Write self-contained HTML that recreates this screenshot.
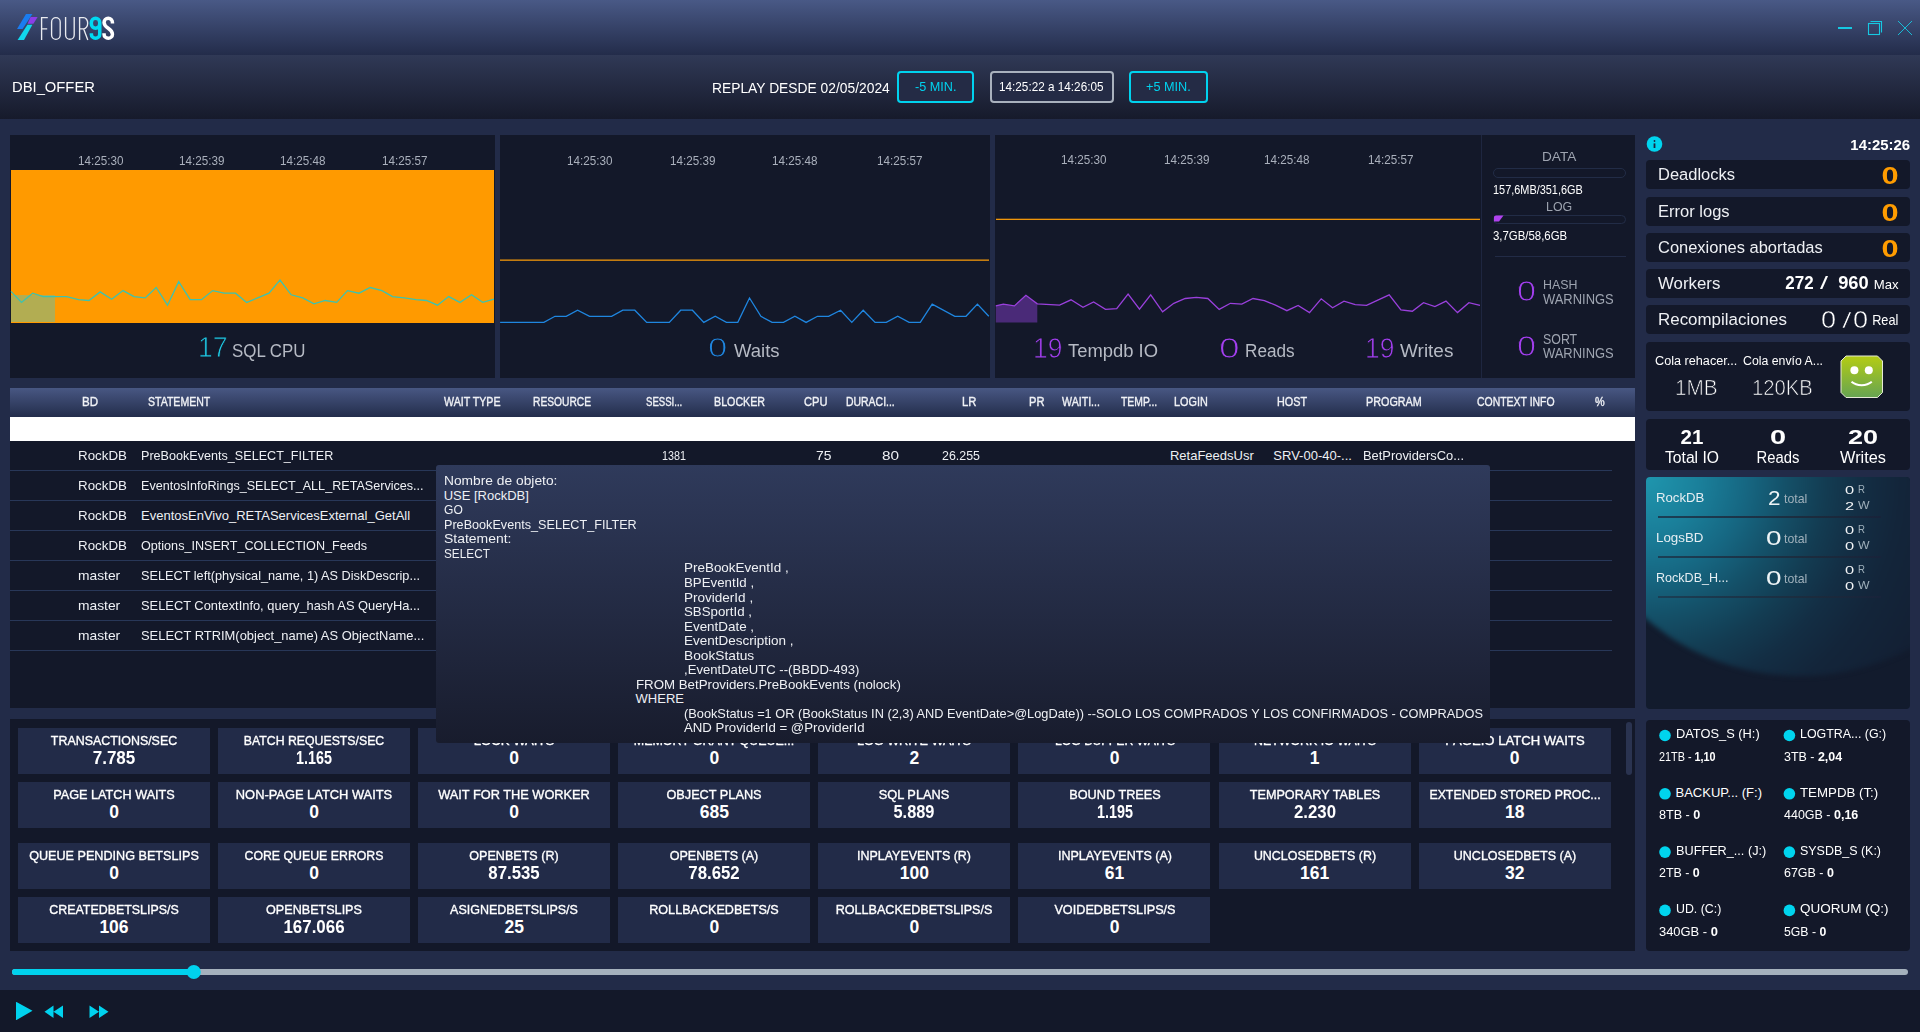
<!DOCTYPE html>
<html><head><meta charset="utf-8"><style>
html,body{margin:0;padding:0;width:1920px;height:1032px;overflow:hidden;background:#222b48;}
body{position:relative;font-family:"Liberation Sans",sans-serif;color:#fff;}
.b{position:absolute;}
.t{position:absolute;white-space:nowrap;z-index:5;}
svg.L{position:absolute;left:0;top:0;z-index:3;}
</style></head><body>
<div class="b" style="left:0px;top:0px;width:1920px;height:55px;background:linear-gradient(#495986,#232c4a);"></div>
<div class="b" style="left:0px;top:55px;width:1920px;height:64px;background:linear-gradient(#303956,#161a2b);"></div>
<div class="b" style="left:0px;top:119px;width:1920px;height:871px;background:#222b48;"></div>
<div class="b" style="left:0px;top:990px;width:1920px;height:42px;background:#131829;"></div>
<div class="b" style="left:897px;top:71px;width:77px;height:32px;border:2px solid #00d2ee;border-radius:4px;box-sizing:border-box;background:#242b45;"></div>
<div class="b" style="left:990px;top:71px;width:124px;height:32px;border:2px solid #a9b1bd;border-radius:4px;box-sizing:border-box;background:#242b45;"></div>
<div class="b" style="left:1129px;top:71px;width:79px;height:32px;border:2px solid #00d2ee;border-radius:4px;box-sizing:border-box;background:#242b45;"></div>
<div class="b" style="left:10px;top:135px;width:485px;height:243px;background:#131829;"></div>
<div class="b" style="left:500px;top:135px;width:490px;height:243px;background:#131829;"></div>
<div class="b" style="left:995px;top:135px;width:640px;height:243px;background:#131829;"></div>
<div class="b" style="left:1481px;top:135px;width:1px;height:243px;background:#1e2640;"></div>
<div class="b" style="left:1493px;top:168px;width:133px;height:10px;border:1.5px solid #222c46;border-radius:5px;box-sizing:border-box;"></div>
<div class="b" style="left:1493px;top:214.5px;width:133px;height:9.5px;border:1.5px solid #222c46;border-radius:5px;box-sizing:border-box;"></div>
<div class="b" style="left:1495px;top:255.5px;width:131px;height:1.0px;background:#222b46;"></div>
<div class="b" style="left:1646px;top:160px;width:264px;height:29px;background:#131829;border-radius:4px;"></div>
<div class="b" style="left:1646px;top:197px;width:264px;height:29px;background:#131829;border-radius:4px;"></div>
<div class="b" style="left:1646px;top:233px;width:264px;height:29px;background:#131829;border-radius:4px;"></div>
<div class="b" style="left:1646px;top:269px;width:264px;height:29px;background:#131829;border-radius:4px;"></div>
<div class="b" style="left:1646px;top:305px;width:264px;height:29px;background:#131829;border-radius:4px;"></div>
<div class="b" style="left:1646px;top:342px;width:264px;height:69px;background:#131829;border-radius:4px;"></div>
<div class="b" style="left:1646px;top:419px;width:264px;height:51px;background:#131829;border-radius:4px;"></div>
<div class="b" style="left:1646px;top:477px;width:264px;height:232px;background:#121b2d;border-radius:4px;overflow:hidden;"><div class="b" style="left:-82px;top:-273px;width:472px;height:472px;border-radius:50%;filter:blur(2.5px);background:radial-gradient(circle at 82px 273px,#1f96ae 0px,#1a7f9a 55px,#166782 100px,#145068 140px,#133c52 180px,#132e44 215px,#13253a 255px,#131f33 320px);"></div></div>
<div class="b" style="left:1658px;top:515.5px;width:223px;height:2.0px;background:linear-gradient(90deg,#1a3f55,#1b2b3d 70%,#18233a);"></div>
<div class="b" style="left:1658px;top:555.5px;width:223px;height:2.0px;background:linear-gradient(90deg,#1a3f55,#1b2b3d 70%,#18233a);"></div>
<div class="b" style="left:1658px;top:595.5px;width:223px;height:2.0px;background:linear-gradient(90deg,#1a3f55,#1b2b3d 70%,#18233a);"></div>
<div class="b" style="left:1646px;top:720px;width:264px;height:231px;background:#131829;border-radius:4px;"></div>
<div class="b" style="left:10px;top:388px;width:1625px;height:29px;background:linear-gradient(#485783,#232d4b);"></div>
<div class="b" style="left:10px;top:417px;width:1625px;height:24px;background:#ffffff;"></div>
<div class="b" style="left:10px;top:441px;width:1625px;height:267px;background:#131829;"></div>
<div class="b" style="left:10px;top:470px;width:1602px;height:1px;background:#283758;"></div>
<div class="b" style="left:10px;top:500px;width:1602px;height:1px;background:#283758;"></div>
<div class="b" style="left:10px;top:530px;width:1602px;height:1px;background:#283758;"></div>
<div class="b" style="left:10px;top:560px;width:1602px;height:1px;background:#283758;"></div>
<div class="b" style="left:10px;top:590px;width:1602px;height:1px;background:#283758;"></div>
<div class="b" style="left:10px;top:620px;width:1602px;height:1px;background:#283758;"></div>
<div class="b" style="left:10px;top:650px;width:1602px;height:1px;background:#283758;"></div>
<div class="b" style="left:10px;top:719px;width:1625px;height:232px;background:#131829;"></div>
<div class="b" style="left:1625.5px;top:722px;width:6.5px;height:53px;background:#2a3350;border-radius:3px;"></div>
<div class="b" style="left:18px;top:728px;width:192px;height:46px;background:#222b48;"></div>
<div class="b" style="left:218px;top:728px;width:192px;height:46px;background:#222b48;"></div>
<div class="b" style="left:418px;top:728px;width:192px;height:46px;background:#222b48;"></div>
<div class="b" style="left:618px;top:728px;width:192px;height:46px;background:#222b48;"></div>
<div class="b" style="left:818px;top:728px;width:192px;height:46px;background:#222b48;"></div>
<div class="b" style="left:1018px;top:728px;width:192px;height:46px;background:#222b48;"></div>
<div class="b" style="left:1219px;top:728px;width:192px;height:46px;background:#222b48;"></div>
<div class="b" style="left:1419px;top:728px;width:192px;height:46px;background:#222b48;"></div>
<div class="b" style="left:18px;top:782px;width:192px;height:46px;background:#222b48;"></div>
<div class="b" style="left:218px;top:782px;width:192px;height:46px;background:#222b48;"></div>
<div class="b" style="left:418px;top:782px;width:192px;height:46px;background:#222b48;"></div>
<div class="b" style="left:618px;top:782px;width:192px;height:46px;background:#222b48;"></div>
<div class="b" style="left:818px;top:782px;width:192px;height:46px;background:#222b48;"></div>
<div class="b" style="left:1018px;top:782px;width:192px;height:46px;background:#222b48;"></div>
<div class="b" style="left:1219px;top:782px;width:192px;height:46px;background:#222b48;"></div>
<div class="b" style="left:1419px;top:782px;width:192px;height:46px;background:#222b48;"></div>
<div class="b" style="left:18px;top:843px;width:192px;height:46px;background:#222b48;"></div>
<div class="b" style="left:218px;top:843px;width:192px;height:46px;background:#222b48;"></div>
<div class="b" style="left:418px;top:843px;width:192px;height:46px;background:#222b48;"></div>
<div class="b" style="left:618px;top:843px;width:192px;height:46px;background:#222b48;"></div>
<div class="b" style="left:818px;top:843px;width:192px;height:46px;background:#222b48;"></div>
<div class="b" style="left:1018px;top:843px;width:192px;height:46px;background:#222b48;"></div>
<div class="b" style="left:1219px;top:843px;width:192px;height:46px;background:#222b48;"></div>
<div class="b" style="left:1419px;top:843px;width:192px;height:46px;background:#222b48;"></div>
<div class="b" style="left:18px;top:897px;width:192px;height:46px;background:#222b48;"></div>
<div class="b" style="left:218px;top:897px;width:192px;height:46px;background:#222b48;"></div>
<div class="b" style="left:418px;top:897px;width:192px;height:46px;background:#222b48;"></div>
<div class="b" style="left:618px;top:897px;width:192px;height:46px;background:#222b48;"></div>
<div class="b" style="left:818px;top:897px;width:192px;height:46px;background:#222b48;"></div>
<div class="b" style="left:1018px;top:897px;width:192px;height:46px;background:#222b48;"></div>
<div class="b" style="left:436px;top:465px;width:1054px;height:278px;background:linear-gradient(#2f3a5b,#181c2d);border-radius:3px;z-index:20;"></div>
<svg class="L" width="1920" height="1032" viewBox="0 0 1920 1032">
<polygon points="26,14 32.4,14 22.6,29 17,29" fill="#1a7cf0"/>
<polygon points="30.6,17 37.6,17 33.4,23.8 27.6,23.8" fill="#8b3ee6"/>
<polygon points="27.4,24.8 32.4,24.8 24,40 17.6,40" fill="#11d6ec"/>
<g fill="none" stroke="#e9ebf0" stroke-width="1.35" stroke-linecap="butt"><path d="M41.6,40 V17.6 H47.8 M41.6,28.8 H47.2"/><rect x="51.6" y="17.6" width="8.6" height="21.7" rx="4.3"/><path d="M65.6,17 V35 A4.3,4.3 0 0 0 74.2,35 V17"/><path d="M79.6,40 V17.6 H83.6 A4,5.5 0 0 1 83.6,28.8 H79.6 M83.6,28.8 L87.8,40"/></g>
<g fill="none" stroke-width="3.5"><path d="M91.35,22.55 A4.2,4.2 0 0 1 99.75,22.55 V34.15 A4.2,4.2 0 0 1 91.35,34.15 V33.2 M99.75,24.1 A4.2,4.2 0 0 1 91.35,24.1 V22.55" stroke="#00d9f0"/><path d="M112.45,23.6 V22.55 A4.2,4.2 0 0 0 104.05,22.55 C104.05,28.2 112.45,28.3 112.45,34.15 A4.2,4.2 0 0 1 104.05,34.15 V33.2" stroke="#ffffff"/></g>
<g stroke="#16c8e2" fill="none"><path d="M1838,28 H1852" stroke-width="2"/><rect x="1868.5" y="23.5" width="11" height="11" stroke-width="1.1"/><path d="M1870.5,21.5 H1881.5 V32.5" stroke-width="1.1"/><path d="M1898,21 L1912,35 M1912,21 L1898,35" stroke-width="0.9"/></g>
<rect x="11" y="170" width="483" height="153" fill="#ff9a00"/>
<rect x="11" y="295" width="44" height="27" fill="#b2ad52"/>
<polyline points="11.0,291.4 21.5,302.4 32.7,293.2 43.2,296.6 66.7,296.6 78.5,299.7 89.0,300.5 100.2,291.9 111.7,299.2 123.0,290.6 134.0,296.6 145.2,297.9 156.2,287.5 167.5,305.2 178.7,281.7 190.2,299.7 201.5,299.7 212.7,290.6 224.2,293.2 235.5,293.2 246.7,302.4 257.7,297.9 269.0,293.2 280.0,280.1 291.2,294.8 302.7,297.9 314.0,303.9 325.2,300.5 336.7,302.4 347.5,290.6 359.0,293.2 370.2,287.5 382.0,290.6 392.5,296.6 404.2,297.9 416.0,299.7 426.5,300.5 437.5,305.2 448.7,296.6 460.0,302.4 471.5,294.8 482.7,302.4 494.0,299.2" fill="none" stroke="#3cc3b0" stroke-width="1.3"/>
<rect x="500" y="259.5" width="489" height="1.3" fill="#f0960a"/>
<polyline points="500.1,322.4 543.9,322.4 555.0,316.3 566.2,316.3 577.6,310.2 589.6,316.3 611.6,316.3 622.8,310.2 634.8,310.2 646.7,322.4 669.3,322.4 680.7,310.2 692.4,310.2 703.8,322.4 715.2,316.3 726.4,322.4 737.8,322.4 749.5,298.0 760.9,316.3 772.1,322.4 783.5,322.4 794.9,316.3 806.1,322.4 817.5,316.3 828.6,316.3 840.6,310.2 851.8,322.4 863.2,310.2 875.1,322.4 886.3,322.4 897.7,316.3 909.1,322.4 920.3,322.4 932.2,304.1 954.8,316.3 966.0,316.3 977.4,304.1 988.8,316.3" fill="none" stroke="#1f86e0" stroke-width="1.3"/>
<rect x="996" y="218.7" width="484" height="1.3" fill="#f0960a"/>
<polygon points="995.8,322.4 995.8,305.9 1003.3,304.1 1014.4,305.9 1025.9,295.3 1037.3,303.8 1037.3,322.4" fill="#4a2a78"/>
<polyline points="995.8,305.9 1003.3,304.1 1014.4,305.9 1025.9,295.3 1037.3,303.8 1059.6,305.1 1071.0,299.8 1083.0,307.3 1093.6,301.9 1105.5,309.4 1116.7,308.6 1128.1,294.0 1139.5,309.1 1150.7,294.8 1162.6,311.8 1173.8,303.3 1185.2,298.5 1196.4,297.4 1207.8,298.5 1219.2,309.4 1230.4,303.3 1241.8,304.1 1253.0,298.5 1264.4,300.6 1275.5,305.1 1286.9,310.7 1298.1,305.4 1309.5,312.6 1321.2,298.8 1332.6,307.8 1344.0,301.1 1355.2,304.6 1366.6,305.4 1377.8,300.1 1389.2,294.8 1400.9,309.9 1412.3,311.2 1423.5,302.7 1434.9,306.5 1446.0,301.1 1457.5,312.6 1468.9,302.7 1480.0,305.4" fill="none" stroke="#9a40dc" stroke-width="1.3"/>
<path d="M1494,217 Q1494,215.5 1496,215.5 L1503.5,215.5 L1499,221.5 L1494,221.5 Z" fill="#b042ee"/>
<circle cx="1654.5" cy="144" r="7.8" fill="#00d4ee"/>
<rect x="1653.6" y="143.4" width="1.8" height="4.6" fill="#1c2440"/><rect x="1653.6" y="140" width="1.8" height="1.9" rx="0.9" fill="#1c2440"/>
<defs><linearGradient id="sm" x1="0" y1="0" x2="0" y2="1"><stop offset="0" stop-color="#b4cc14"/><stop offset="1" stop-color="#66a452"/></linearGradient></defs>
<polygon points="1846,356 1877.5,356 1882.5,361 1882.5,392.5 1877.5,397.5 1846,397.5 1841,392.5 1841,361" fill="url(#sm)" stroke="#e6ead6" stroke-width="1"/>
<circle cx="1854.4" cy="370.3" r="4" fill="#fff"/><circle cx="1868.8" cy="370.3" r="4" fill="#fff"/>
<path d="M1851.5,381.8 A13,9 0 0 0 1871.8,381.8" stroke="#fff" stroke-width="2" fill="none"/>
<circle cx="1665.0" cy="735.5" r="5.8" fill="#00d4ee"/>
<circle cx="1789.4" cy="735.5" r="5.8" fill="#00d4ee"/>
<circle cx="1665.0" cy="793.8" r="5.8" fill="#00d4ee"/>
<circle cx="1789.4" cy="793.8" r="5.8" fill="#00d4ee"/>
<circle cx="1665.0" cy="852.1" r="5.8" fill="#00d4ee"/>
<circle cx="1789.4" cy="852.1" r="5.8" fill="#00d4ee"/>
<circle cx="1665.0" cy="910.4" r="5.8" fill="#00d4ee"/>
<circle cx="1789.4" cy="910.4" r="5.8" fill="#00d4ee"/>
<rect x="12" y="969" width="1896" height="6" rx="3" fill="#a5b1bd"/>
<rect x="12" y="969" width="182" height="6" rx="3" fill="#00d2ee"/>
<circle cx="193.8" cy="972" r="7" fill="#00d2ee"/>
<path d="M16,1002.5 Q15.5,1002 16.5,1002 L32.5,1010.8 L16.5,1020 Q15.5,1020.3 16,1019.5 Z" fill="#00d2ee"/>
<path d="M44.5,1011.7 L53.5,1005.5 V1018 Z M53.5,1011.7 L63,1005.5 V1018 Z" fill="#00d2ee"/>
<path d="M89.5,1005.5 L99,1011.7 L89.5,1018 Z M99,1005.5 L108.5,1011.7 L99,1018 Z" fill="#00d2ee"/>
</svg>
<div class="t" style="font-size:14.50px;line-height:14.50px;top:80.00px;font-weight:500;left:11.98px;transform:scaleX(1.0189);transform-origin:0 0;"><span>DBI_OFFER</span></div>
<div class="t" style="font-size:13.75px;line-height:13.75px;top:82.00px;font-weight:500;left:711.52px;transform:scaleX(1.0055);transform-origin:0 0;"><span>REPLAY DESDE 02/05/2024</span></div>
<div class="t" style="font-size:13.00px;line-height:13.00px;top:80.00px;font-weight:500;color:#00d2ee;left:914.56px;transform:scaleX(0.9741);transform-origin:0 0;"><span>-5 MIN.</span></div>
<div class="t" style="font-size:13.00px;line-height:13.00px;top:80.00px;font-weight:500;left:999.09px;transform:scaleX(0.9036);transform-origin:0 0;"><span>14:25:22 a 14:26:05</span></div>
<div class="t" style="font-size:13.00px;line-height:13.00px;top:80.00px;font-weight:500;color:#00d2ee;left:1146.26px;transform:scaleX(0.9758);transform-origin:0 0;"><span>+5 MIN.</span></div>
<div class="t" style="font-size:13.50px;line-height:13.50px;top:154.00px;color:#aab0bc;left:78.09px;transform:scaleX(0.8645);transform-origin:0 0;"><span>14:25:30</span></div>
<div class="t" style="font-size:13.50px;line-height:13.50px;top:154.00px;color:#aab0bc;left:179.29px;transform:scaleX(0.8645);transform-origin:0 0;"><span>14:25:39</span></div>
<div class="t" style="font-size:13.50px;line-height:13.50px;top:154.00px;color:#aab0bc;left:280.29px;transform:scaleX(0.8645);transform-origin:0 0;"><span>14:25:48</span></div>
<div class="t" style="font-size:13.50px;line-height:13.50px;top:154.00px;color:#aab0bc;left:382.09px;transform:scaleX(0.8645);transform-origin:0 0;"><span>14:25:57</span></div>
<div class="t" style="font-size:13.50px;line-height:13.50px;top:154.00px;color:#aab0bc;left:567.19px;transform:scaleX(0.8645);transform-origin:0 0;"><span>14:25:30</span></div>
<div class="t" style="font-size:13.50px;line-height:13.50px;top:154.00px;color:#aab0bc;left:670.19px;transform:scaleX(0.8645);transform-origin:0 0;"><span>14:25:39</span></div>
<div class="t" style="font-size:13.50px;line-height:13.50px;top:154.00px;color:#aab0bc;left:772.49px;transform:scaleX(0.8645);transform-origin:0 0;"><span>14:25:48</span></div>
<div class="t" style="font-size:13.50px;line-height:13.50px;top:154.00px;color:#aab0bc;left:876.59px;transform:scaleX(0.8645);transform-origin:0 0;"><span>14:25:57</span></div>
<div class="t" style="font-size:13.50px;line-height:13.50px;top:153.00px;color:#aab0bc;left:1061.29px;transform:scaleX(0.8645);transform-origin:0 0;"><span>14:25:30</span></div>
<div class="t" style="font-size:13.50px;line-height:13.50px;top:153.00px;color:#aab0bc;left:1163.59px;transform:scaleX(0.8645);transform-origin:0 0;"><span>14:25:39</span></div>
<div class="t" style="font-size:13.50px;line-height:13.50px;top:153.00px;color:#aab0bc;left:1264.49px;transform:scaleX(0.8645);transform-origin:0 0;"><span>14:25:48</span></div>
<div class="t" style="font-size:13.50px;line-height:13.50px;top:153.00px;color:#aab0bc;left:1367.59px;transform:scaleX(0.8645);transform-origin:0 0;"><span>14:25:57</span></div>
<div class="t" style="font-size:29.00px;line-height:29.00px;top:333.00px;font-weight:300;color:#1ecbe6;left:197.87px;transform:scaleX(0.9176);transform-origin:0 0;-webkit-text-stroke:0.9px #131829;"><span>17</span></div>
<div class="t" style="font-size:18.00px;line-height:18.00px;top:342.00px;font-weight:500;color:#b6bac4;left:232.31px;transform:scaleX(0.9382);transform-origin:0 0;"><span>SQL CPU</span></div>
<div class="t" style="font-size:28.00px;line-height:28.00px;top:334.00px;color:#1f86e0;left:707.79px;transform:scaleX(1.2393);transform-origin:0 0;-webkit-text-stroke:0.9px #131829;"><span>0</span></div>
<div class="t" style="font-size:17.75px;line-height:17.75px;top:343.00px;font-weight:500;color:#b6bac4;left:734.25px;transform:scaleX(1.0431);transform-origin:0 0;"><span>Waits</span></div>
<div class="t" style="font-size:29.00px;line-height:29.00px;top:334.00px;color:#a43ff0;left:1032.87px;transform:scaleX(0.9142);transform-origin:0 0;-webkit-text-stroke:0.9px #131829;"><span>19</span></div>
<div class="t" style="font-size:17.50px;line-height:17.50px;top:343.00px;font-weight:500;color:#b6bac4;left:1068.26px;transform:scaleX(1.0522);transform-origin:0 0;"><span>Tempdb IO</span></div>
<div class="t" style="font-size:29.00px;line-height:29.00px;top:334.00px;color:#a43ff0;left:1219.21px;transform:scaleX(1.2742);transform-origin:0 0;-webkit-text-stroke:0.9px #131829;"><span>0</span></div>
<div class="t" style="font-size:17.50px;line-height:17.50px;top:343.00px;font-weight:500;color:#b6bac4;left:1245.20px;transform:scaleX(0.9804);transform-origin:0 0;"><span>Reads</span></div>
<div class="t" style="font-size:29.00px;line-height:29.00px;top:334.00px;color:#a43ff0;left:1364.87px;transform:scaleX(0.9142);transform-origin:0 0;-webkit-text-stroke:0.9px #131829;"><span>19</span></div>
<div class="t" style="font-size:17.50px;line-height:17.50px;top:343.00px;font-weight:500;color:#b6bac4;left:1400.24px;transform:scaleX(1.0842);transform-origin:0 0;"><span>Writes</span></div>
<div class="t" style="font-size:13.50px;line-height:13.50px;top:150.00px;font-weight:500;color:#9ea4b0;left:1542.22px;transform:scaleX(1.0074);transform-origin:0 0;"><span>DATA</span></div>
<div class="t" style="font-size:13.00px;line-height:13.00px;top:183.00px;font-weight:500;left:1492.62px;transform:scaleX(0.8389);transform-origin:0 0;"><span>157,6MB/351,6GB</span></div>
<div class="t" style="font-size:13.25px;line-height:13.25px;top:200.00px;font-weight:500;color:#9ea4b0;left:1546.27px;transform:scaleX(0.9345);transform-origin:0 0;"><span>LOG</span></div>
<div class="t" style="font-size:13.00px;line-height:13.00px;top:229.00px;font-weight:500;left:1492.60px;transform:scaleX(0.8776);transform-origin:0 0;"><span>3,7GB/58,6GB</span></div>
<div class="t" style="font-size:29.00px;line-height:29.00px;top:277.00px;font-weight:300;color:#a43ff0;left:1517.20px;transform:scaleX(1.1811);transform-origin:0 0;-webkit-text-stroke:0.9px #131829;"><span>0</span></div>
<div class="t" style="font-size:13.50px;line-height:13.50px;top:278.00px;font-weight:500;color:#9ea4b0;left:1542.87px;transform:scaleX(0.9176);transform-origin:0 0;"><span>HASH</span></div>
<div class="t" style="font-size:14.00px;line-height:14.00px;top:292.00px;font-weight:500;color:#9ea4b0;left:1542.85px;transform:scaleX(0.9238);transform-origin:0 0;"><span>WARNINGS</span></div>
<div class="t" style="font-size:29.00px;line-height:29.00px;top:332.00px;font-weight:300;color:#a43ff0;left:1517.20px;transform:scaleX(1.1811);transform-origin:0 0;-webkit-text-stroke:0.9px #131829;"><span>0</span></div>
<div class="t" style="font-size:14.00px;line-height:14.00px;top:332.00px;font-weight:500;color:#9ea4b0;left:1542.87px;transform:scaleX(0.8837);transform-origin:0 0;"><span>SORT</span></div>
<div class="t" style="font-size:14.00px;line-height:14.00px;top:346.00px;font-weight:500;color:#9ea4b0;left:1542.85px;transform:scaleX(0.9238);transform-origin:0 0;"><span>WARNINGS</span></div>
<div class="t" style="font-size:14.50px;line-height:14.50px;top:138.00px;font-weight:700;right:9.88px;transform:scaleX(1.0283);transform-origin:100% 0;"><span>14:25:26</span></div>
<div class="t" style="font-size:16.25px;line-height:16.25px;top:166.00px;font-weight:500;color:#eef0f4;left:1657.72px;transform:scaleX(1.0152);transform-origin:0 0;"><span>Deadlocks</span></div>
<div class="t" style="font-size:16.25px;line-height:16.25px;top:203.00px;font-weight:500;color:#eef0f4;left:1657.72px;transform:scaleX(1.0165);transform-origin:0 0;"><span>Error logs</span></div>
<div class="t" style="font-size:16.25px;line-height:16.25px;top:239.00px;font-weight:500;color:#eef0f4;left:1657.72px;transform:scaleX(1.0132);transform-origin:0 0;"><span>Conexiones abortadas</span></div>
<div class="t" style="font-size:16.25px;line-height:16.25px;top:275.00px;font-weight:500;color:#eef0f4;left:1657.71px;transform:scaleX(1.0363);transform-origin:0 0;"><span>Workers</span></div>
<div class="t" style="font-size:16.25px;line-height:16.25px;top:311.00px;font-weight:500;color:#eef0f4;left:1657.71px;transform:scaleX(1.0418);transform-origin:0 0;"><span>Recompilaciones</span></div>
<div class="t" style="font-size:24.50px;line-height:24.50px;top:164.00px;font-weight:700;color:#ff9c00;right:21.53px;transform:scaleX(1.2536);transform-origin:100% 0;"><span>0</span></div>
<div class="t" style="font-size:24.50px;line-height:24.50px;top:201.00px;font-weight:700;color:#ff9c00;right:21.53px;transform:scaleX(1.2536);transform-origin:100% 0;"><span>0</span></div>
<div class="t" style="font-size:24.50px;line-height:24.50px;top:237.00px;font-weight:700;color:#ff9c00;right:21.53px;transform:scaleX(1.2536);transform-origin:100% 0;"><span>0</span></div>
<div class="t" style="font-size:17.75px;line-height:17.75px;top:275.00px;font-weight:600;right:106.41px;transform:scaleX(0.9563);transform-origin:100% 0;"><span>272</span></div>
<div class="t" style="font-size:18.00px;line-height:18.00px;top:274.00px;font-weight:300;left:1819.99px;transform:scaleX(1.6043);transform-origin:0 0;"><span>/</span></div>
<div class="t" style="font-size:17.75px;line-height:17.75px;top:275.00px;font-weight:600;right:51.36px;transform:scaleX(1.0293);transform-origin:100% 0;"><span>960</span></div>
<div class="t" style="font-size:13.00px;line-height:13.00px;top:278.00px;font-weight:500;right:21.54px;transform:scaleX(1.0129);transform-origin:100% 0;"><span>Max</span></div>
<div class="t" style="font-size:23.00px;line-height:23.00px;top:309.00px;font-weight:300;left:1821.25px;transform:scaleX(1.1765);transform-origin:0 0;-webkit-text-stroke:0.45px #131829;"><span>0</span></div>
<div class="t" style="font-size:22.00px;line-height:22.00px;top:310.00px;font-weight:300;left:1842.19px;transform:scaleX(1.5695);transform-origin:0 0;-webkit-text-stroke:0.7px #131829;"><span>/</span></div>
<div class="t" style="font-size:23.00px;line-height:23.00px;top:309.00px;font-weight:300;left:1853.35px;transform:scaleX(1.1765);transform-origin:0 0;-webkit-text-stroke:0.45px #131829;"><span>0</span></div>
<div class="t" style="font-size:13.75px;line-height:13.75px;top:314.00px;font-weight:500;right:22.16px;transform:scaleX(0.9246);transform-origin:100% 0;"><span>Real</span></div>
<div class="t" style="font-size:13.25px;line-height:13.25px;top:354.00px;font-weight:500;left:1655.26px;transform:scaleX(0.9557);transform-origin:0 0;"><span>Cola rehacer...</span></div>
<div class="t" style="font-size:13.25px;line-height:13.25px;top:354.00px;font-weight:500;left:1742.57px;transform:scaleX(0.9286);transform-origin:0 0;"><span>Cola envío A...</span></div>
<div class="t" style="font-size:21.50px;line-height:21.50px;top:378.00px;font-weight:300;left:1674.97px;transform:scaleX(0.9648);transform-origin:0 0;-webkit-text-stroke:0.7px #131829;"><span>1MB</span></div>
<div class="t" style="font-size:21.50px;line-height:21.50px;top:378.00px;font-weight:300;left:1752.29px;transform:scaleX(0.9418);transform-origin:0 0;-webkit-text-stroke:0.7px #131829;"><span>120KB</span></div>
<div class="t" style="font-size:21.00px;line-height:21.00px;top:426.00px;font-weight:700;left:692.00px;width:2000px;text-align:center;transform:scaleX(0.9754);"><span>21</span></div>
<div class="t" style="font-size:21.00px;line-height:21.00px;top:426.00px;font-weight:700;left:777.70px;width:2000px;text-align:center;transform:scaleX(1.3770);"><span>0</span></div>
<div class="t" style="font-size:21.00px;line-height:21.00px;top:426.00px;font-weight:700;left:863.20px;width:2000px;text-align:center;transform:scaleX(1.2866);"><span>20</span></div>
<div class="t" style="font-size:16.00px;line-height:16.00px;top:450.00px;font-weight:500;left:692.40px;width:2000px;text-align:center;transform:scaleX(0.9800);"><span>Total IO</span></div>
<div class="t" style="font-size:16.00px;line-height:16.00px;top:450.00px;font-weight:500;left:778.20px;width:2000px;text-align:center;transform:scaleX(0.9269);"><span>Reads</span></div>
<div class="t" style="font-size:16.00px;line-height:16.00px;top:450.00px;font-weight:500;left:863.30px;width:2000px;text-align:center;transform:scaleX(1.0187);"><span>Writes</span></div>
<div class="t" style="font-size:13.00px;line-height:13.00px;top:491.00px;font-weight:500;color:#e6eef2;left:1655.84px;transform:scaleX(1.0130);transform-origin:0 0;"><span>RockDB</span></div>
<div class="t" style="font-size:20.50px;line-height:20.50px;top:488.00px;font-weight:300;color:#eef4f6;right:139.21px;transform:scaleX(1.0978);transform-origin:100% 0;"><span>2</span></div>
<div class="t" style="font-size:12.25px;line-height:12.25px;top:493.00px;font-weight:500;color:#9fb0bb;left:1784.27px;transform:scaleX(1.0071);transform-origin:0 0;"><span>total</span></div>
<div class="t" style="font-size:11.50px;line-height:11.50px;top:485.00px;font-weight:500;color:#f2f4f6;left:1845.43px;transform:scaleX(1.4244);transform-origin:0 0;"><span>0</span></div>
<div class="t" style="font-size:10.75px;line-height:10.75px;top:484.00px;font-weight:500;color:#9fb0bb;left:1858.16px;transform:scaleX(0.8969);transform-origin:0 0;"><span>R</span></div>
<div class="t" style="font-size:11.50px;line-height:11.50px;top:501.00px;font-weight:500;color:#f2f4f6;left:1845.43px;transform:scaleX(1.4244);transform-origin:0 0;"><span>2</span></div>
<div class="t" style="font-size:10.75px;line-height:10.75px;top:500.00px;font-weight:500;color:#9fb0bb;left:1858.07px;transform:scaleX(1.1354);transform-origin:0 0;"><span>W</span></div>
<div class="t" style="font-size:13.00px;line-height:13.00px;top:531.00px;font-weight:500;color:#e6eef2;left:1655.83px;transform:scaleX(1.0268);transform-origin:0 0;"><span>LogsBD</span></div>
<div class="t" style="font-size:20.50px;line-height:20.50px;top:528.00px;font-weight:300;color:#eef4f6;right:139.02px;transform:scaleX(1.3591);transform-origin:100% 0;"><span>0</span></div>
<div class="t" style="font-size:12.25px;line-height:12.25px;top:533.00px;font-weight:500;color:#9fb0bb;left:1784.27px;transform:scaleX(1.0071);transform-origin:0 0;"><span>total</span></div>
<div class="t" style="font-size:11.50px;line-height:11.50px;top:525.00px;font-weight:500;color:#f2f4f6;left:1845.43px;transform:scaleX(1.4244);transform-origin:0 0;"><span>0</span></div>
<div class="t" style="font-size:10.75px;line-height:10.75px;top:524.00px;font-weight:500;color:#9fb0bb;left:1858.16px;transform:scaleX(0.8969);transform-origin:0 0;"><span>R</span></div>
<div class="t" style="font-size:11.50px;line-height:11.50px;top:541.00px;font-weight:500;color:#f2f4f6;left:1845.43px;transform:scaleX(1.4244);transform-origin:0 0;"><span>0</span></div>
<div class="t" style="font-size:10.75px;line-height:10.75px;top:540.00px;font-weight:500;color:#9fb0bb;left:1858.07px;transform:scaleX(1.1354);transform-origin:0 0;"><span>W</span></div>
<div class="t" style="font-size:13.00px;line-height:13.00px;top:571.00px;font-weight:500;color:#e6eef2;left:1655.86px;transform:scaleX(0.9650);transform-origin:0 0;"><span>RockDB_H...</span></div>
<div class="t" style="font-size:20.50px;line-height:20.50px;top:568.00px;font-weight:300;color:#eef4f6;right:139.02px;transform:scaleX(1.3591);transform-origin:100% 0;"><span>0</span></div>
<div class="t" style="font-size:12.25px;line-height:12.25px;top:573.00px;font-weight:500;color:#9fb0bb;left:1784.27px;transform:scaleX(1.0071);transform-origin:0 0;"><span>total</span></div>
<div class="t" style="font-size:11.50px;line-height:11.50px;top:565.00px;font-weight:500;color:#f2f4f6;left:1845.43px;transform:scaleX(1.4244);transform-origin:0 0;"><span>0</span></div>
<div class="t" style="font-size:10.75px;line-height:10.75px;top:564.00px;font-weight:500;color:#9fb0bb;left:1858.16px;transform:scaleX(0.8969);transform-origin:0 0;"><span>R</span></div>
<div class="t" style="font-size:11.50px;line-height:11.50px;top:581.00px;font-weight:500;color:#f2f4f6;left:1845.43px;transform:scaleX(1.4244);transform-origin:0 0;"><span>0</span></div>
<div class="t" style="font-size:10.75px;line-height:10.75px;top:580.00px;font-weight:500;color:#9fb0bb;left:1858.07px;transform:scaleX(1.1354);transform-origin:0 0;"><span>W</span></div>
<div class="t" style="font-size:13.00px;line-height:13.00px;top:727.00px;font-weight:500;left:1675.55px;transform:scaleX(0.9870);transform-origin:0 0;"><span>DATOS_S (H:)</span></div>
<div class="t" style="font-size:13.25px;line-height:13.25px;top:750.00px;left:1659.32px;transform:scaleX(0.8182);transform-origin:0 0;"><span>21TB - <b style="font-weight:700">1,10</b></span></div>
<div class="t" style="font-size:13.00px;line-height:13.00px;top:727.00px;font-weight:500;left:1799.97px;transform:scaleX(0.9541);transform-origin:0 0;"><span>LOGTRA... (G:)</span></div>
<div class="t" style="font-size:13.25px;line-height:13.25px;top:750.00px;left:1783.66px;transform:scaleX(0.9399);transform-origin:0 0;"><span>3TB - <b style="font-weight:700">2,04</b></span></div>
<div class="t" style="font-size:13.00px;line-height:13.00px;top:786.00px;font-weight:500;left:1675.54px;"><span>BACKUP... (F:)</span></div>
<div class="t" style="font-size:13.25px;line-height:13.25px;top:808.00px;left:1659.26px;transform:scaleX(0.9507);transform-origin:0 0;"><span>8TB - <b style="font-weight:700">0</b></span></div>
<div class="t" style="font-size:13.00px;line-height:13.00px;top:786.00px;font-weight:500;left:1799.94px;transform:scaleX(1.0212);transform-origin:0 0;"><span>TEMPDB (T:)</span></div>
<div class="t" style="font-size:13.25px;line-height:13.25px;top:808.00px;left:1783.66px;transform:scaleX(0.9427);transform-origin:0 0;"><span>440GB - <b style="font-weight:700">0,16</b></span></div>
<div class="t" style="font-size:13.00px;line-height:13.00px;top:844.00px;font-weight:500;left:1675.56px;transform:scaleX(0.9760);transform-origin:0 0;"><span>BUFFER_... (J:)</span></div>
<div class="t" style="font-size:13.25px;line-height:13.25px;top:866.00px;left:1659.26px;transform:scaleX(0.9389);transform-origin:0 0;"><span>2TB - <b style="font-weight:700">0</b></span></div>
<div class="t" style="font-size:13.00px;line-height:13.00px;top:844.00px;font-weight:500;left:1799.96px;transform:scaleX(0.9585);transform-origin:0 0;"><span>SYSDB_S (K:)</span></div>
<div class="t" style="font-size:13.25px;line-height:13.25px;top:866.00px;left:1783.66px;transform:scaleX(0.9410);transform-origin:0 0;"><span>67GB - <b style="font-weight:700">0</b></span></div>
<div class="t" style="font-size:13.00px;line-height:13.00px;top:902.00px;font-weight:500;left:1675.57px;transform:scaleX(0.9514);transform-origin:0 0;"><span>UD. (C:)</span></div>
<div class="t" style="font-size:13.25px;line-height:13.25px;top:925.00px;left:1659.25px;transform:scaleX(0.9751);transform-origin:0 0;"><span>340GB - <b style="font-weight:700">0</b></span></div>
<div class="t" style="font-size:13.00px;line-height:13.00px;top:902.00px;font-weight:500;left:1799.93px;transform:scaleX(1.0394);transform-origin:0 0;"><span>QUORUM (Q:)</span></div>
<div class="t" style="font-size:13.25px;line-height:13.25px;top:925.00px;left:1783.67px;transform:scaleX(0.9252);transform-origin:0 0;"><span>5GB - <b style="font-weight:700">0</b></span></div>
<div class="t" style="font-size:12.00px;line-height:12.00px;top:396.00px;font-weight:500;color:#f0f2f6;left:81.99px;transform:scaleX(0.9653);transform-origin:0 0;-webkit-text-stroke:0.35px currentColor;"><span>BD</span></div>
<div class="t" style="font-size:12.00px;line-height:12.00px;top:396.00px;font-weight:500;color:#f0f2f6;left:148.43px;transform:scaleX(0.8780);transform-origin:0 0;-webkit-text-stroke:0.35px currentColor;"><span>STATEMENT</span></div>
<div class="t" style="font-size:12.00px;line-height:12.00px;top:396.00px;font-weight:500;color:#f0f2f6;left:443.63px;transform:scaleX(0.8866);transform-origin:0 0;-webkit-text-stroke:0.35px currentColor;"><span>WAIT TYPE</span></div>
<div class="t" style="font-size:12.00px;line-height:12.00px;top:396.00px;font-weight:500;color:#f0f2f6;left:532.94px;transform:scaleX(0.8532);transform-origin:0 0;-webkit-text-stroke:0.35px currentColor;"><span>RESOURCE</span></div>
<div class="t" style="font-size:12.00px;line-height:12.00px;top:396.00px;font-weight:500;color:#f0f2f6;left:646.36px;transform:scaleX(0.7994);transform-origin:0 0;-webkit-text-stroke:0.35px currentColor;"><span>SESSI...</span></div>
<div class="t" style="font-size:12.00px;line-height:12.00px;top:396.00px;font-weight:500;color:#f0f2f6;left:713.63px;transform:scaleX(0.8903);transform-origin:0 0;-webkit-text-stroke:0.35px currentColor;"><span>BLOCKER</span></div>
<div class="t" style="font-size:12.00px;line-height:12.00px;top:396.00px;font-weight:500;color:#f0f2f6;left:803.91px;transform:scaleX(0.9272);transform-origin:0 0;-webkit-text-stroke:0.35px currentColor;"><span>CPU</span></div>
<div class="t" style="font-size:12.00px;line-height:12.00px;top:396.00px;font-weight:500;color:#f0f2f6;left:845.63px;transform:scaleX(0.8702);transform-origin:0 0;-webkit-text-stroke:0.35px currentColor;"><span>DURACI...</span></div>
<div class="t" style="font-size:12.00px;line-height:12.00px;top:396.00px;font-weight:500;color:#f0f2f6;left:962.31px;transform:scaleX(0.9393);transform-origin:0 0;-webkit-text-stroke:0.35px currentColor;"><span>LR</span></div>
<div class="t" style="font-size:12.00px;line-height:12.00px;top:396.00px;font-weight:500;color:#f0f2f6;left:1028.61px;transform:scaleX(0.9282);transform-origin:0 0;-webkit-text-stroke:0.35px currentColor;"><span>PR</span></div>
<div class="t" style="font-size:12.00px;line-height:12.00px;top:396.00px;font-weight:500;color:#f0f2f6;left:1062.33px;transform:scaleX(0.8847);transform-origin:0 0;-webkit-text-stroke:0.35px currentColor;"><span>WAITI...</span></div>
<div class="t" style="font-size:12.00px;line-height:12.00px;top:396.00px;font-weight:500;color:#f0f2f6;left:1121.34px;transform:scaleX(0.8649);transform-origin:0 0;-webkit-text-stroke:0.35px currentColor;"><span>TEMP...</span></div>
<div class="t" style="font-size:12.00px;line-height:12.00px;top:396.00px;font-weight:500;color:#f0f2f6;left:1173.62px;transform:scaleX(0.9043);transform-origin:0 0;-webkit-text-stroke:0.35px currentColor;"><span>LOGIN</span></div>
<div class="t" style="font-size:12.00px;line-height:12.00px;top:396.00px;font-weight:500;color:#f0f2f6;left:1277.42px;transform:scaleX(0.9017);transform-origin:0 0;-webkit-text-stroke:0.35px currentColor;"><span>HOST</span></div>
<div class="t" style="font-size:12.00px;line-height:12.00px;top:396.00px;font-weight:500;color:#f0f2f6;left:1366.32px;transform:scaleX(0.8993);transform-origin:0 0;-webkit-text-stroke:0.35px currentColor;"><span>PROGRAM</span></div>
<div class="t" style="font-size:12.00px;line-height:12.00px;top:396.00px;font-weight:500;color:#f0f2f6;left:1477.33px;transform:scaleX(0.8711);transform-origin:0 0;-webkit-text-stroke:0.35px currentColor;"><span>CONTEXT INFO</span></div>
<div class="t" style="font-size:12.00px;line-height:12.00px;top:396.00px;font-weight:500;color:#f0f2f6;left:1594.92px;transform:scaleX(0.9055);transform-origin:0 0;-webkit-text-stroke:0.35px currentColor;"><span>%</span></div>
<div class="t" style="font-size:13.00px;line-height:13.00px;top:449.00px;font-weight:500;color:#eef0f4;left:78.13px;transform:scaleX(1.0257);transform-origin:0 0;"><span>RockDB</span></div>
<div class="t" style="font-size:13.00px;line-height:13.00px;top:449.00px;font-weight:500;color:#eef0f4;left:141.06px;transform:scaleX(0.9691);transform-origin:0 0;"><span>PreBookEvents_SELECT_FILTER</span></div>
<div class="t" style="font-size:13.00px;line-height:13.00px;top:479.00px;font-weight:500;color:#eef0f4;left:78.13px;transform:scaleX(1.0257);transform-origin:0 0;"><span>RockDB</span></div>
<div class="t" style="font-size:13.00px;line-height:13.00px;top:479.00px;font-weight:500;color:#eef0f4;left:141.06px;transform:scaleX(0.9688);transform-origin:0 0;"><span>EventosInfoRings_SELECT_ALL_RETAServices...</span></div>
<div class="t" style="font-size:13.00px;line-height:13.00px;top:509.00px;font-weight:500;color:#eef0f4;left:78.13px;transform:scaleX(1.0257);transform-origin:0 0;"><span>RockDB</span></div>
<div class="t" style="font-size:13.00px;line-height:13.00px;top:509.00px;font-weight:500;color:#eef0f4;left:141.05px;"><span>EventosEnVivo_RETAServicesExternal_GetAll</span></div>
<div class="t" style="font-size:13.00px;line-height:13.00px;top:539.00px;font-weight:500;color:#eef0f4;left:78.13px;transform:scaleX(1.0257);transform-origin:0 0;"><span>RockDB</span></div>
<div class="t" style="font-size:13.00px;line-height:13.00px;top:539.00px;font-weight:500;color:#eef0f4;left:141.06px;transform:scaleX(0.9695);transform-origin:0 0;"><span>Options_INSERT_COLLECTION_Feeds</span></div>
<div class="t" style="font-size:13.00px;line-height:13.00px;top:569.00px;font-weight:500;color:#eef0f4;left:78.12px;transform:scaleX(1.0617);transform-origin:0 0;"><span>master</span></div>
<div class="t" style="font-size:13.00px;line-height:13.00px;top:569.00px;font-weight:500;color:#eef0f4;left:141.05px;transform:scaleX(0.9786);transform-origin:0 0;"><span>SELECT left(physical_name, 1) AS DiskDescrip...</span></div>
<div class="t" style="font-size:13.00px;line-height:13.00px;top:599.00px;font-weight:500;color:#eef0f4;left:78.12px;transform:scaleX(1.0617);transform-origin:0 0;"><span>master</span></div>
<div class="t" style="font-size:13.00px;line-height:13.00px;top:599.00px;font-weight:500;color:#eef0f4;left:141.05px;transform:scaleX(0.9890);transform-origin:0 0;"><span>SELECT ContextInfo, query_hash AS QueryHa...</span></div>
<div class="t" style="font-size:13.00px;line-height:13.00px;top:629.00px;font-weight:500;color:#eef0f4;left:78.12px;transform:scaleX(1.0617);transform-origin:0 0;"><span>master</span></div>
<div class="t" style="font-size:13.00px;line-height:13.00px;top:629.00px;font-weight:500;color:#eef0f4;left:141.05px;transform:scaleX(0.9944);transform-origin:0 0;"><span>SELECT RTRIM(object_name) AS ObjectName...</span></div>
<div class="t" style="font-size:13.00px;line-height:13.00px;top:449.00px;font-weight:500;color:#eef0f4;left:662.32px;transform:scaleX(0.8295);transform-origin:0 0;"><span>1381</span></div>
<div class="t" style="font-size:13.00px;line-height:13.00px;top:449.00px;font-weight:500;color:#eef0f4;left:816.21px;transform:scaleX(1.0695);transform-origin:0 0;"><span>75</span></div>
<div class="t" style="font-size:13.00px;line-height:13.00px;top:449.00px;font-weight:500;color:#eef0f4;left:881.76px;transform:scaleX(1.1765);transform-origin:0 0;"><span>80</span></div>
<div class="t" style="font-size:13.00px;line-height:13.00px;top:449.00px;font-weight:500;color:#eef0f4;left:942.27px;transform:scaleX(0.9542);transform-origin:0 0;"><span>26.255</span></div>
<div class="t" style="font-size:13.00px;line-height:13.00px;top:449.00px;font-weight:500;color:#eef0f4;left:1169.94px;"><span>RetaFeedsUsr</span></div>
<div class="t" style="font-size:13.00px;line-height:13.00px;top:449.00px;font-weight:500;color:#eef0f4;left:1273.35px;"><span>SRV-00-40-...</span></div>
<div class="t" style="font-size:13.00px;line-height:13.00px;top:449.00px;font-weight:500;color:#eef0f4;left:1362.95px;transform:scaleX(0.9912);transform-origin:0 0;"><span>BetProvidersCo...</span></div>
<div class="t" style="font-size:13.00px;line-height:13.00px;top:734.00px;font-weight:500;left:-886.00px;width:2000px;text-align:center;transform:scaleX(0.9558);-webkit-text-stroke:0.35px currentColor;"><span>TRANSACTIONS/SEC</span></div>
<div class="t" style="font-size:17.50px;line-height:17.50px;top:750.00px;font-weight:700;left:-886.00px;width:2000px;text-align:center;transform:scaleX(0.9725);"><span>7.785</span></div>
<div class="t" style="font-size:13.00px;line-height:13.00px;top:734.00px;font-weight:500;left:-685.90px;width:2000px;text-align:center;transform:scaleX(0.9454);-webkit-text-stroke:0.35px currentColor;"><span>BATCH REQUESTS/SEC</span></div>
<div class="t" style="font-size:17.50px;line-height:17.50px;top:750.00px;font-weight:700;left:-685.90px;width:2000px;text-align:center;transform:scaleX(0.8182);"><span>1.165</span></div>
<div class="t" style="font-size:13.00px;line-height:13.00px;top:734.00px;font-weight:500;left:-485.80px;width:2000px;text-align:center;transform:scaleX(1.0115);-webkit-text-stroke:0.35px currentColor;"><span>LOCK WAITS</span></div>
<div class="t" style="font-size:17.50px;line-height:17.50px;top:750.00px;font-weight:700;left:-485.80px;width:2000px;text-align:center;"><span>0</span></div>
<div class="t" style="font-size:13.00px;line-height:13.00px;top:734.00px;font-weight:500;left:-285.70px;width:2000px;text-align:center;transform:scaleX(0.9576);-webkit-text-stroke:0.35px currentColor;"><span>MEMORY GRANT QUEUE...</span></div>
<div class="t" style="font-size:17.50px;line-height:17.50px;top:750.00px;font-weight:700;left:-285.70px;width:2000px;text-align:center;"><span>0</span></div>
<div class="t" style="font-size:13.00px;line-height:13.00px;top:734.00px;font-weight:500;left:-85.60px;width:2000px;text-align:center;transform:scaleX(0.9734);-webkit-text-stroke:0.35px currentColor;"><span>LOG WRITE WAITS</span></div>
<div class="t" style="font-size:17.50px;line-height:17.50px;top:750.00px;font-weight:700;left:-85.60px;width:2000px;text-align:center;"><span>2</span></div>
<div class="t" style="font-size:13.00px;line-height:13.00px;top:734.00px;font-weight:500;left:114.50px;width:2000px;text-align:center;transform:scaleX(0.9438);-webkit-text-stroke:0.35px currentColor;"><span>LOG BUFFER WAITS</span></div>
<div class="t" style="font-size:17.50px;line-height:17.50px;top:750.00px;font-weight:700;left:114.50px;width:2000px;text-align:center;"><span>0</span></div>
<div class="t" style="font-size:13.00px;line-height:13.00px;top:734.00px;font-weight:500;left:314.60px;width:2000px;text-align:center;transform:scaleX(0.9521);-webkit-text-stroke:0.35px currentColor;"><span>NETWORK IO WAITS</span></div>
<div class="t" style="font-size:17.50px;line-height:17.50px;top:750.00px;font-weight:700;left:314.60px;width:2000px;text-align:center;"><span>1</span></div>
<div class="t" style="font-size:13.00px;line-height:13.00px;top:734.00px;font-weight:500;left:514.70px;width:2000px;text-align:center;transform:scaleX(1.0066);-webkit-text-stroke:0.35px currentColor;"><span>PAGEIO LATCH WAITS</span></div>
<div class="t" style="font-size:17.50px;line-height:17.50px;top:750.00px;font-weight:700;left:514.70px;width:2000px;text-align:center;"><span>0</span></div>
<div class="t" style="font-size:13.00px;line-height:13.00px;top:788.00px;font-weight:500;left:-886.00px;width:2000px;text-align:center;transform:scaleX(0.9751);-webkit-text-stroke:0.35px currentColor;"><span>PAGE LATCH WAITS</span></div>
<div class="t" style="font-size:17.50px;line-height:17.50px;top:804.00px;font-weight:700;left:-886.00px;width:2000px;text-align:center;"><span>0</span></div>
<div class="t" style="font-size:13.00px;line-height:13.00px;top:788.00px;font-weight:500;left:-685.90px;width:2000px;text-align:center;transform:scaleX(0.9899);-webkit-text-stroke:0.35px currentColor;"><span>NON-PAGE LATCH WAITS</span></div>
<div class="t" style="font-size:17.50px;line-height:17.50px;top:804.00px;font-weight:700;left:-685.90px;width:2000px;text-align:center;"><span>0</span></div>
<div class="t" style="font-size:13.00px;line-height:13.00px;top:788.00px;font-weight:500;left:-485.80px;width:2000px;text-align:center;transform:scaleX(0.9831);-webkit-text-stroke:0.35px currentColor;"><span>WAIT FOR THE WORKER</span></div>
<div class="t" style="font-size:17.50px;line-height:17.50px;top:804.00px;font-weight:700;left:-485.80px;width:2000px;text-align:center;"><span>0</span></div>
<div class="t" style="font-size:13.00px;line-height:13.00px;top:788.00px;font-weight:500;left:-285.70px;width:2000px;text-align:center;transform:scaleX(0.9782);-webkit-text-stroke:0.35px currentColor;"><span>OBJECT PLANS</span></div>
<div class="t" style="font-size:17.50px;line-height:17.50px;top:804.00px;font-weight:700;left:-285.70px;width:2000px;text-align:center;"><span>685</span></div>
<div class="t" style="font-size:13.00px;line-height:13.00px;top:788.00px;font-weight:500;left:-85.60px;width:2000px;text-align:center;transform:scaleX(0.9847);-webkit-text-stroke:0.35px currentColor;"><span>SQL PLANS</span></div>
<div class="t" style="font-size:17.50px;line-height:17.50px;top:804.00px;font-weight:700;left:-85.60px;width:2000px;text-align:center;transform:scaleX(0.9351);"><span>5.889</span></div>
<div class="t" style="font-size:13.00px;line-height:13.00px;top:788.00px;font-weight:500;left:114.50px;width:2000px;text-align:center;transform:scaleX(0.9775);-webkit-text-stroke:0.35px currentColor;"><span>BOUND TREES</span></div>
<div class="t" style="font-size:17.50px;line-height:17.50px;top:804.00px;font-weight:700;left:114.50px;width:2000px;text-align:center;transform:scaleX(0.8182);"><span>1.195</span></div>
<div class="t" style="font-size:13.00px;line-height:13.00px;top:788.00px;font-weight:500;left:314.60px;width:2000px;text-align:center;transform:scaleX(0.9730);-webkit-text-stroke:0.35px currentColor;"><span>TEMPORARY TABLES</span></div>
<div class="t" style="font-size:17.50px;line-height:17.50px;top:804.00px;font-weight:700;left:314.60px;width:2000px;text-align:center;transform:scaleX(0.9585);"><span>2.230</span></div>
<div class="t" style="font-size:13.00px;line-height:13.00px;top:788.00px;font-weight:500;left:514.70px;width:2000px;text-align:center;transform:scaleX(0.9492);-webkit-text-stroke:0.35px currentColor;"><span>EXTENDED STORED PROC...</span></div>
<div class="t" style="font-size:17.50px;line-height:17.50px;top:804.00px;font-weight:700;left:514.70px;width:2000px;text-align:center;"><span>18</span></div>
<div class="t" style="font-size:13.00px;line-height:13.00px;top:849.00px;font-weight:500;left:-886.00px;width:2000px;text-align:center;transform:scaleX(0.9708);-webkit-text-stroke:0.35px currentColor;"><span>QUEUE PENDING BETSLIPS</span></div>
<div class="t" style="font-size:17.50px;line-height:17.50px;top:865.00px;font-weight:700;left:-886.00px;width:2000px;text-align:center;"><span>0</span></div>
<div class="t" style="font-size:13.00px;line-height:13.00px;top:849.00px;font-weight:500;left:-685.90px;width:2000px;text-align:center;transform:scaleX(0.9480);-webkit-text-stroke:0.35px currentColor;"><span>CORE QUEUE ERRORS</span></div>
<div class="t" style="font-size:17.50px;line-height:17.50px;top:865.00px;font-weight:700;left:-685.90px;width:2000px;text-align:center;"><span>0</span></div>
<div class="t" style="font-size:13.00px;line-height:13.00px;top:849.00px;font-weight:500;left:-485.80px;width:2000px;text-align:center;transform:scaleX(0.9661);-webkit-text-stroke:0.35px currentColor;"><span>OPENBETS (R)</span></div>
<div class="t" style="font-size:17.50px;line-height:17.50px;top:865.00px;font-weight:700;left:-485.80px;width:2000px;text-align:center;transform:scaleX(0.9607);"><span>87.535</span></div>
<div class="t" style="font-size:13.00px;line-height:13.00px;top:849.00px;font-weight:500;left:-285.70px;width:2000px;text-align:center;transform:scaleX(0.9661);-webkit-text-stroke:0.35px currentColor;"><span>OPENBETS (A)</span></div>
<div class="t" style="font-size:17.50px;line-height:17.50px;top:865.00px;font-weight:700;left:-285.70px;width:2000px;text-align:center;transform:scaleX(0.9607);"><span>78.652</span></div>
<div class="t" style="font-size:13.00px;line-height:13.00px;top:849.00px;font-weight:500;left:-85.60px;width:2000px;text-align:center;transform:scaleX(0.9569);-webkit-text-stroke:0.35px currentColor;"><span>INPLAYEVENTS (R)</span></div>
<div class="t" style="font-size:17.50px;line-height:17.50px;top:865.00px;font-weight:700;left:-85.60px;width:2000px;text-align:center;"><span>100</span></div>
<div class="t" style="font-size:13.00px;line-height:13.00px;top:849.00px;font-weight:500;left:114.50px;width:2000px;text-align:center;transform:scaleX(0.9651);-webkit-text-stroke:0.35px currentColor;"><span>INPLAYEVENTS (A)</span></div>
<div class="t" style="font-size:17.50px;line-height:17.50px;top:865.00px;font-weight:700;left:114.50px;width:2000px;text-align:center;"><span>61</span></div>
<div class="t" style="font-size:13.00px;line-height:13.00px;top:849.00px;font-weight:500;left:314.60px;width:2000px;text-align:center;transform:scaleX(0.9560);-webkit-text-stroke:0.35px currentColor;"><span>UNCLOSEDBETS (R)</span></div>
<div class="t" style="font-size:17.50px;line-height:17.50px;top:865.00px;font-weight:700;left:314.60px;width:2000px;text-align:center;"><span>161</span></div>
<div class="t" style="font-size:13.00px;line-height:13.00px;top:849.00px;font-weight:500;left:514.70px;width:2000px;text-align:center;transform:scaleX(0.9636);-webkit-text-stroke:0.35px currentColor;"><span>UNCLOSEDBETS (A)</span></div>
<div class="t" style="font-size:17.50px;line-height:17.50px;top:865.00px;font-weight:700;left:514.70px;width:2000px;text-align:center;"><span>32</span></div>
<div class="t" style="font-size:13.00px;line-height:13.00px;top:903.00px;font-weight:500;left:-886.00px;width:2000px;text-align:center;transform:scaleX(0.9549);-webkit-text-stroke:0.35px currentColor;"><span>CREATEDBETSLIPS/S</span></div>
<div class="t" style="font-size:17.50px;line-height:17.50px;top:919.00px;font-weight:700;left:-886.00px;width:2000px;text-align:center;"><span>106</span></div>
<div class="t" style="font-size:13.00px;line-height:13.00px;top:903.00px;font-weight:500;left:-685.90px;width:2000px;text-align:center;transform:scaleX(0.9685);-webkit-text-stroke:0.35px currentColor;"><span>OPENBETSLIPS</span></div>
<div class="t" style="font-size:17.50px;line-height:17.50px;top:919.00px;font-weight:700;left:-685.90px;width:2000px;text-align:center;transform:scaleX(0.9664);"><span>167.066</span></div>
<div class="t" style="font-size:13.00px;line-height:13.00px;top:903.00px;font-weight:500;left:-485.80px;width:2000px;text-align:center;transform:scaleX(0.9615);-webkit-text-stroke:0.35px currentColor;"><span>ASIGNEDBETSLIPS/S</span></div>
<div class="t" style="font-size:17.50px;line-height:17.50px;top:919.00px;font-weight:700;left:-485.80px;width:2000px;text-align:center;"><span>25</span></div>
<div class="t" style="font-size:13.00px;line-height:13.00px;top:903.00px;font-weight:500;left:-285.70px;width:2000px;text-align:center;transform:scaleX(0.9693);-webkit-text-stroke:0.35px currentColor;"><span>ROLLBACKEDBETS/S</span></div>
<div class="t" style="font-size:17.50px;line-height:17.50px;top:919.00px;font-weight:700;left:-285.70px;width:2000px;text-align:center;"><span>0</span></div>
<div class="t" style="font-size:13.00px;line-height:13.00px;top:903.00px;font-weight:500;left:-85.60px;width:2000px;text-align:center;transform:scaleX(0.9684);-webkit-text-stroke:0.35px currentColor;"><span>ROLLBACKEDBETSLIPS/S</span></div>
<div class="t" style="font-size:17.50px;line-height:17.50px;top:919.00px;font-weight:700;left:-85.60px;width:2000px;text-align:center;"><span>0</span></div>
<div class="t" style="font-size:13.00px;line-height:13.00px;top:903.00px;font-weight:500;left:114.50px;width:2000px;text-align:center;transform:scaleX(0.9749);-webkit-text-stroke:0.35px currentColor;"><span>VOIDEDBETSLIPS/S</span></div>
<div class="t" style="font-size:17.50px;line-height:17.50px;top:919.00px;font-weight:700;left:114.50px;width:2000px;text-align:center;"><span>0</span></div>
<div class="t" style="font-size:13.00px;line-height:13.00px;top:474.00px;font-weight:500;color:#eef0f4;left:443.62px;transform:scaleX(1.0604);transform-origin:0 0;z-index:21;"><span>Nombre de objeto:</span></div>
<div class="t" style="font-size:13.00px;line-height:13.00px;top:489.00px;font-weight:500;color:#eef0f4;left:443.64px;z-index:21;"><span>USE [RockDB]</span></div>
<div class="t" style="font-size:13.00px;line-height:13.00px;top:503.00px;font-weight:500;color:#eef0f4;left:443.68px;transform:scaleX(0.9272);transform-origin:0 0;z-index:21;"><span>GO</span></div>
<div class="t" style="font-size:13.00px;line-height:13.00px;top:518.00px;font-weight:500;color:#eef0f4;left:443.66px;transform:scaleX(0.9711);transform-origin:0 0;z-index:21;"><span>PreBookEvents_SELECT_FILTER</span></div>
<div class="t" style="font-size:13.00px;line-height:13.00px;top:532.00px;font-weight:500;color:#eef0f4;left:443.61px;transform:scaleX(1.0726);transform-origin:0 0;z-index:21;"><span>Statement:</span></div>
<div class="t" style="font-size:13.00px;line-height:13.00px;top:547.00px;font-weight:500;color:#eef0f4;left:443.69px;transform:scaleX(0.9064);transform-origin:0 0;z-index:21;"><span>SELECT</span></div>
<div class="t" style="font-size:13.00px;line-height:13.00px;top:561.00px;font-weight:500;color:#eef0f4;left:683.53px;transform:scaleX(1.0341);transform-origin:0 0;z-index:21;"><span>PreBookEventId ,</span></div>
<div class="t" style="font-size:13.00px;line-height:13.00px;top:576.00px;font-weight:500;color:#eef0f4;left:683.54px;transform:scaleX(1.0207);transform-origin:0 0;z-index:21;"><span>BPEventId ,</span></div>
<div class="t" style="font-size:13.00px;line-height:13.00px;top:591.00px;font-weight:500;color:#eef0f4;left:683.53px;transform:scaleX(1.0401);transform-origin:0 0;z-index:21;"><span>ProviderId ,</span></div>
<div class="t" style="font-size:13.00px;line-height:13.00px;top:605.00px;font-weight:500;color:#eef0f4;left:683.54px;transform:scaleX(1.0217);transform-origin:0 0;z-index:21;"><span>SBSportId ,</span></div>
<div class="t" style="font-size:13.00px;line-height:13.00px;top:620.00px;font-weight:500;color:#eef0f4;left:683.53px;transform:scaleX(1.0315);transform-origin:0 0;z-index:21;"><span>EventDate ,</span></div>
<div class="t" style="font-size:13.00px;line-height:13.00px;top:634.00px;font-weight:500;color:#eef0f4;left:683.53px;transform:scaleX(1.0372);transform-origin:0 0;z-index:21;"><span>EventDescription ,</span></div>
<div class="t" style="font-size:13.00px;line-height:13.00px;top:649.00px;font-weight:500;color:#eef0f4;left:683.52px;transform:scaleX(1.0561);transform-origin:0 0;z-index:21;"><span>BookStatus</span></div>
<div class="t" style="font-size:13.00px;line-height:13.00px;top:663.00px;font-weight:500;color:#eef0f4;left:683.54px;transform:scaleX(1.0076);transform-origin:0 0;z-index:21;"><span>,EventDateUTC --(BBDD-493)</span></div>
<div class="t" style="font-size:13.00px;line-height:13.00px;top:678.00px;font-weight:500;color:#eef0f4;left:635.54px;transform:scaleX(1.0210);transform-origin:0 0;z-index:21;"><span>FROM BetProviders.PreBookEvents (nolock)</span></div>
<div class="t" style="font-size:13.00px;line-height:13.00px;top:692.00px;font-weight:500;color:#eef0f4;left:635.55px;z-index:21;"><span>WHERE</span></div>
<div class="t" style="font-size:13.00px;line-height:13.00px;top:707.00px;font-weight:500;color:#eef0f4;left:683.55px;transform:scaleX(0.9826);transform-origin:0 0;z-index:21;"><span>(BookStatus =1 OR (BookStatus IN (2,3) AND EventDate&gt;@LogDate)) --SOLO LOS COMPRADOS Y LOS CONFIRMADOS - COMPRADOS</span></div>
<div class="t" style="font-size:13.00px;line-height:13.00px;top:721.00px;font-weight:500;color:#eef0f4;left:683.54px;transform:scaleX(1.0164);transform-origin:0 0;z-index:21;"><span>AND ProviderId = @ProviderId</span></div>
</body></html>
